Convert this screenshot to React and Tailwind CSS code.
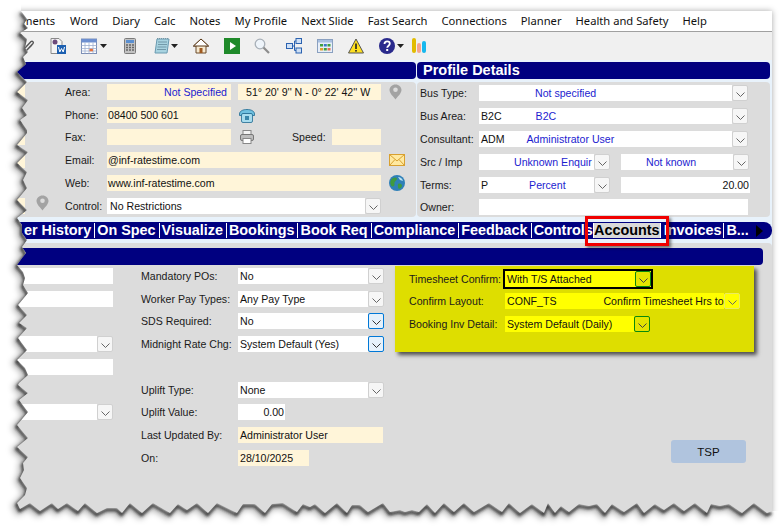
import React from "react";

const leftEdge = "21,11 27,19 24,24 28,28 20,33 27,39 25,48 28,52 23,57 26,64 17,72 27,82 17,92 28,100 22,108 27,115 20,120 27,130 27,133 17,145 28,152 17,163 27,172 23,180 27,188 17,200 27,210 17,218 22,225 22,233 27,240 22,247 26,253 22,258 17,265 23,272 25,278 23,285 28,293 18,305 27,315 19,323 27,328 18,338 27,350 17,360 25,368 28,375 19,383 18,385 28,393 19,400 28,412 17,425 28,438 17,447 28,457 23,463 24,470 20,478 27,488 25,495 17,503";
const bottomEdge = "20,509 30,503 40,511 52,503 58,509 67,503 78,511 85,503 97,513 107,508 117,508 122,513 130,503 142,513 153,503 170,513 178,504 187,510 197,503 208,513 217,503 237,513 243,504 255,504 265,513 272,504 283,503 297,512 303,504 310,507 315,504 325,513 337,503 347,513 352,505 360,505 368,512 383,503 390,512 400,510 405,512 412,510 419,512 427,504 435,513 444,503 454,512 464,503 474,512 489,503 502,512 509,503 520,513 532,504 544,513 548,503 555,513 561,506 569,512 579,504 589,506 597,504 605,513 612,504 624,512 637,503 644,513 655,504 664,510 674,503 684,511 695,503 707,513 711,504 720,506 729,504 742,513 754,503 767,513 772,511";
const edge = leftEdge + " " + bottomEdge;
const outside = "0,0 21,0 " + edge + " 782,511 782,530 0,530";

function Torn() {
  return (
    <svg className="absolute left-0 top-0 pointer-events-none" width="782" height="530">
      <defs>
        <clipPath id="out"><polygon points={outside} /></clipPath>
        <filter id="b1" x="-5%" y="-5%" width="110%" height="110%"><feGaussianBlur stdDeviation="1.4" /></filter>
        <filter id="b2" x="-5%" y="-5%" width="110%" height="110%"><feGaussianBlur stdDeviation="3" /></filter>
      </defs>
      <polygon points={outside} fill="#fff" />
      <g clipPath="url(#out)">
        <polyline points={edge} fill="none" stroke="#000" strokeOpacity="0.35" strokeWidth="5" filter="url(#b2)" transform="translate(-2 3)" />
        <polyline points={edge} fill="none" stroke="#222" strokeWidth="2.5" filter="url(#b1)" transform="translate(-0.5 2)" />
      </g>
    </svg>
  );
}

function Chevron({ color = "#666" }) {
  return (
    <svg width="9" height="5" viewBox="0 0 9 5" className="mt-[2px]">
      <polyline points="0.5,0.5 4.5,4.5 8.5,0.5" fill="none" stroke={color} strokeWidth="1" />
    </svg>
  );
}

function Dd({ kind = "gray" }) {
  if (kind === "blue")
    return <div className="w-[16px] h-[16px] shrink-0 flex items-center justify-center rounded-[2px] border border-[#0078d7] bg-[#e5f1fb]"><Chevron color="#333" /></div>;
  if (kind === "green")
    return <div className="w-[16px] h-[16px] shrink-0 flex items-center justify-center rounded-[2px] border border-[#0a8a0a] bg-[#e4e400]"><Chevron color="#444" /></div>;
  if (kind === "yellow")
    return <div className="w-[16px] h-[16px] shrink-0 flex items-center justify-center rounded-[2px] border border-[#ecec60] bg-[#ffff00]"><Chevron color="#666" /></div>;
  return <div className="w-[16px] h-[16px] shrink-0 flex items-center justify-center rounded-[2px] border border-[#d0d0d0] bg-[#f6f6f6]"><Chevron /></div>;
}

const Label = ({ children, className = "" }) => <div className={"shrink-0 whitespace-nowrap text-[#1a1a1a] " + className}>{children}</div>;

const Cream = ({ className = "", children }) => <div className={"h-[16px] bg-[#fff5d9] flex items-center overflow-hidden whitespace-nowrap shrink-0 " + className}>{children}</div>;
const White = ({ className = "", children }) => <div className={"h-[16px] bg-white flex items-center overflow-hidden whitespace-nowrap shrink-0 " + className}>{children}</div>;
const Blue = ({ className = "", children }) => <span className={"text-[#1c1ccf] " + className}>{children}</span>;

function Pin({ className = "" }) {
  return (
    <svg width="13" height="16" viewBox="0 0 13 16" className={className}>
      <path d="M6.5 0.5C3 0.5 0.5 3 0.5 6C0.5 9.5 5 13 6.5 15.5C8 13 12.5 9.5 12.5 6C12.5 3 10 0.5 6.5 0.5Z" fill="#a3a3a3" />
      <circle cx="6.5" cy="5.8" r="2.3" fill="#dcdcdc" />
    </svg>
  );
}

function Caret({ className = "" }) {
  return <svg width="7" height="4" viewBox="0 0 7 4" className={className}><polygon points="0,0 7,0 3.5,4" fill="#222" /></svg>;
}

const s = { width: 16, height: 16, viewBox: "0 0 16 16" };

function Toolbar() {
  return (
    <div className="h-[28px] bg-[#f0f0f0] flex items-center pl-[7px] shrink-0">
      <svg width="12" height="14" viewBox="0 0 12 14">
        <path d="M3 12L10 4.5C11 3.2 9.5 1.5 8 2.5L2 9C1 10.5 2.5 12 4 11L9 6" fill="none" stroke="#555" strokeWidth="1.4" />
      </svg>
      <svg {...s} className="ml-[15px]">
        <path d="M1 0.5H9L12 3.5V15.5H1Z" fill="#f4f4f4" stroke="#8a8a8a" />
        <circle cx="5" cy="4" r="2.5" fill="#6b4a7a" />
        <rect x="7" y="7" width="9" height="9" fill="#1c5fb0" />
        <path d="M8.5 9L9.8 14L11.5 10.5L13.2 14L14.5 9" fill="none" stroke="#fff" strokeWidth="1" />
      </svg>
      <svg {...s} className="ml-[15px]">
        <rect x="0.5" y="1" width="15" height="14.5" fill="#fff" stroke="#7d8fb5" />
        <rect x="0.5" y="1" width="15" height="3.5" fill="#6d8fd0" />
        <path d="M0.5 7.5H15.5M0.5 10.5H15.5M0.5 13H15.5M4 4.5V15.5M8 4.5V15.5M12 4.5V15.5" stroke="#9fb0d0" strokeWidth="0.8" />
        <rect x="8.5" y="10.8" width="3.4" height="2.5" fill="#e8703a" />
      </svg>
      <Caret className="ml-[3px]" />
      <svg width="12" height="16" viewBox="0 0 12 16" className="ml-[17px]">
        <rect x="0.5" y="0.5" width="11" height="15" rx="1" fill="#c2c2c2" stroke="#7a7a7a" />
        <rect x="2" y="2" width="8" height="3" fill="#5a8fd0" />
        <path d="M2 7H4M5 7H7M8 7H10M2 9.5H4M5 9.5H7M8 9.5H10M2 12H4M5 12H7M8 12H10" stroke="#666" strokeWidth="1.4" />
      </svg>
      <svg {...s} className="ml-[18px]">
        <path d="M3 1H15L13 15H1Z" fill="#a8d3e0" stroke="#6a9ab0" />
        <path d="M4 1L3 0M6 1L5 0M8 1L7 0M10 1L9 0M12 1L11 0M14 1L13 0M4 4H13M4 6.5H13M3.5 9H12.5M3 11.5H12" stroke="#5a7f90" strokeWidth="0.7" />
      </svg>
      <Caret className="ml-[1px]" />
      <svg {...s} className="ml-[15px]">
        <path d="M8 1L0.5 8H3V15H13V8H15.5Z" fill="#f5e9d0" stroke="#6b4a2a" />
        <path d="M8 1L0.5 8H15.5Z" fill="#fff" stroke="#5a3a1a" />
        <rect x="6.5" y="10" width="3" height="5" fill="#a05a20" />
      </svg>
      <svg {...s} className="ml-[15px]">
        <rect width="16" height="16" fill="#1f8a2a" />
        <polygon points="6,4 12,8 6,12" fill="#fff" />
      </svg>
      <svg {...s} className="ml-[14px]">
        <circle cx="6" cy="6" r="4.8" fill="#eef4fa" stroke="#a8b0b8" strokeWidth="1.3" />
        <path d="M9.5 9.5L15 15" stroke="#8d8d8d" strokeWidth="2.2" />
      </svg>
      <svg {...s} className="ml-[16px]">
        <rect x="0.5" y="5.5" width="6" height="5" fill="#cfe0f5" stroke="#2b62b0" />
        <rect x="10" y="0.5" width="5.5" height="5" fill="#cfe0f5" stroke="#2b62b0" />
        <rect x="10" y="10" width="5.5" height="5" fill="#cfe0f5" stroke="#2b62b0" />
        <path d="M6.5 8H8.5M8.5 3V12.5H10M8.5 3H10" fill="none" stroke="#2b62b0" />
      </svg>
      <svg {...s} className="ml-[15px]">
        <rect x="0.5" y="1.5" width="15" height="13" fill="#e8eff8" stroke="#8aa0c0" />
        <rect x="1" y="2" width="14" height="2.5" fill="#a8c0e0" />
        <rect x="3" y="6" width="3" height="2.5" fill="#3f9f3f" /><rect x="6.8" y="6" width="3" height="2.5" fill="#3b78c8" /><rect x="10.5" y="6" width="3" height="2.5" fill="#3f9f3f" />
        <rect x="3" y="10" width="3" height="2.5" fill="#e0a030" /><rect x="6.8" y="10" width="3" height="2.5" fill="#3f9f3f" /><rect x="10.5" y="10" width="3" height="2.5" fill="#e07050" />
      </svg>
      <svg {...s} className="ml-[15px]">
        <path d="M8 1L15.5 15H0.5Z" fill="#ffe020" stroke="#555" strokeLinejoin="round" />
        <rect x="7.2" y="5.5" width="1.6" height="5.5" fill="#222" />
        <rect x="7.2" y="12" width="1.6" height="1.6" fill="#222" />
      </svg>
      <svg {...s} className="ml-[15px]">
        <circle cx="8" cy="8" r="8" fill="#2a2a8c" />
        <path d="M5.5 6C5.5 4.2 6.8 3.4 8.2 3.4C9.8 3.4 10.8 4.4 10.8 5.7C10.8 7.6 8.2 7.8 8.2 9.8" fill="none" stroke="#fff" strokeWidth="1.8" />
        <rect x="7.2" y="11" width="2" height="2" fill="#fff" />
      </svg>
      <Caret className="ml-[2px]" />
      <svg width="14" height="16" viewBox="0 0 14 16" className="ml-[8px]">
        <rect x="0" y="0" width="4" height="15" rx="2" fill="#e2bc00" />
        <rect x="5" y="5" width="4" height="10" rx="2" fill="#f6a48e" />
        <rect x="10" y="3" width="4" height="12" rx="2" fill="#18b8ee" />
      </svg>
    </div>
  );
}

const tabs = ["er History", "On Spec", "Visualize", "Bookings", "Book Req", "Compliance", "Feedback", "Controls"];

function TabBar() {
  return (
    <div className="h-[17px] mt-[5px] bg-[#000080] rounded-r-[8px] flex items-center pl-[8px] shrink-0 text-white font-bold text-[14.4px] leading-[17px] overflow-hidden">
      {tabs.map((t, i) => (
        <div key={t} className="whitespace-nowrap pr-[3px] mr-[2px] border-r border-white h-[15px] flex items-center">{t}</div>
      ))}
      <div className="whitespace-nowrap w-[68px] h-[15px] -ml-[6px] bg-[#d9d9d9] text-black border-x border-white flex items-center justify-center overflow-hidden">Accounts</div>
      <div className="whitespace-nowrap ml-[3px] pr-[2px] mr-[2px] border-r border-white h-[15px] flex items-center">Invoices</div>
      <div className="whitespace-nowrap">B...</div>
      <svg width="7" height="12" viewBox="0 0 7 12" className="ml-[7px]"><polygon points="0,0 7,6 0,12" fill="#000" /></svg>
    </div>
  );
}

function Profile() {
  return (
    <div className="w-[353px] ml-[1px] flex flex-col shrink-0">
      <div className="h-[17px] mt-[2px] bg-[#000080] rounded-[4px] text-white font-bold text-[14.5px] leading-[17px] pl-[6px]">Profile Details</div>
      <div className="h-[135px] mt-[3px] bg-[#dcdcdc] rounded-[4px] pt-[3px] pl-[3px]">
        <div className="flex h-[23px]"><Label className="w-[59px]">Bus Type:</Label><White className="w-[253px] pl-[56px]"><Blue>Not specified</Blue></White><Dd /></div>
        <div className="flex h-[23px]"><Label className="w-[59px]">Bus Area:</Label><White className="w-[253px] pl-[2px]">B2C<Blue className="ml-[34px]">B2C</Blue></White><Dd /></div>
        <div className="flex h-[23px]"><Label className="w-[59px]">Consultant:</Label><White className="w-[253px] pl-[2px]">ADM<Blue className="ml-[22px]">Administrator User</Blue></White><Dd /></div>
        <div className="flex h-[23px]"><Label className="w-[59px]">Src / Imp</Label><White className="w-[115px] pl-[35px]"><Blue>Unknown Enquir</Blue></White><Dd /><White className="w-[112px] ml-[11px] pl-[25px]"><Blue>Not known</Blue></White><Dd /></div>
        <div className="flex h-[22px]"><Label className="w-[59px]">Terms:</Label><White className="w-[115px] pl-[2px]">P<Blue className="ml-[41px]">Percent</Blue></White><Dd /><White className="w-[129px] ml-[11px] justify-end pr-[1px]">20.00</White></div>
        <div className="flex h-[16px]"><Label className="w-[59px]">Owner:</Label><White className="w-[269px]" /></div>
      </div>
    </div>
  );
}

function Stub() {
  return <div className="w-[9px] h-[16px] bg-[#fff5d9]" />;
}

function Contact() {
  return (
    <div className="w-[400px] flex flex-col shrink-0">
      <div className="h-[17px] mt-[2px] bg-[#000080] rounded-r-[4px]" />
      <div className="h-[135px] mt-[3px] bg-[#dcdcdc] rounded-r-[4px] pt-[2px]">
        <div className="flex h-[23px]"><div className="w-[49px]"><Stub /></div><Label className="w-[42px]">Area:</Label><Cream className="w-[124px] justify-end pr-[4px]"><Blue>Not Specified</Blue></Cream><Cream className="w-[143px] ml-[7px] pl-[8px]">51° 20' 9'' N - 0° 22' 42'' W</Cream><Pin className="ml-[8px]" /></div>
        <div className="flex h-[22px]"><div className="w-[49px]" /><Label className="w-[42px]">Phone:</Label><Cream className="w-[124px] pl-[1px]">08400 500 601</Cream>
          <svg width="16" height="14" viewBox="0 0 16 14" className="ml-[8px] mt-[2px]">
            <path d="M0.5 5C0.5 2 4 0.5 8 0.5C12 0.5 15.5 2 15.5 5V6.5H12V4.5H4V6.5H0.5Z" fill="#6fc0e0" stroke="#1f6a90" strokeWidth="0.8" />
            <rect x="2.5" y="4.5" width="11" height="9" rx="1.5" fill="#a8dcee" stroke="#1f6a90" strokeWidth="0.8" />
            <rect x="6" y="7" width="4" height="4" fill="#3a86aa" />
          </svg>
        </div>
        <div className="flex h-[23px]"><div className="w-[49px]"><Stub /></div><Label className="w-[42px]">Fax:</Label><Cream className="w-[124px]" />
          <svg width="14" height="14" viewBox="0 0 14 14" className="ml-[9px] mt-[1px]">
            <rect x="3" y="0.5" width="8" height="5" fill="#f4f4f4" stroke="#888" />
            <rect x="0.5" y="4.5" width="13" height="6" rx="1.5" fill="#bdbdbd" stroke="#777" />
            <rect x="3" y="8.5" width="8" height="5" fill="#fff" stroke="#888" />
          </svg>
          <Label className="ml-[38px] w-[40px]">Speed:</Label><Cream className="w-[49px]" /></div>
        <div className="flex h-[23px]"><div className="w-[49px]"><Stub /></div><Label className="w-[42px]">Email:</Label><Cream className="w-[274px] pl-[1px]">@inf-ratestime.com</Cream>
          <svg width="16" height="12" viewBox="0 0 16 12" className="ml-[8px] mt-[2px]">
            <rect x="0.5" y="0.5" width="15" height="11" fill="#ffe9a0" stroke="#d8a030" />
            <path d="M0.5 0.5L8 7L15.5 0.5M0.5 11.5L6 5.5M15.5 11.5L10 5.5" fill="none" stroke="#d8a030" />
          </svg>
        </div>
        <div className="flex h-[23px]"><div className="w-[49px]" /><Label className="w-[42px]">Web:</Label><Cream className="w-[274px] pl-[1px]">www.inf-ratestime.com</Cream>
          <svg {...s} className="ml-[8px]">
            <circle cx="8" cy="8" r="8" fill="#2f80b8" />
            <path d="M2 5C4 2 7 2 8 3.5C8 6 5 6 5.5 9C6 11 4 12 2.5 11C1 9 1 7 2 5ZM9 9C11 8 13 9 13 11C12 13.5 10.5 14 9.5 13.5C9 12 8.5 10.5 9 9Z" fill="#3f9a40" />
            <path d="M9 2C11 2 13.5 3.5 14 6L11 5Z" fill="#b8e0f0" />
          </svg>
        </div>
        <div className="flex h-[16px]"><div className="w-[49px] flex"><Stub /><Pin className="ml-[11px] -mt-[3px]" /></div><Label className="w-[42px]">Control:</Label><White className="w-[258px] pl-[3px]">No Restrictions</White><Dd /></div>
      </div>
    </div>
  );
}

function Bottom() {
  return (
    <div className="flex-1 mt-[4px] bg-[#dcdcdc] rounded-tr-[4px] pt-[5px] flex flex-col min-h-0">
      <div className="h-[17px] w-[747px] bg-[#000080] rounded-r-[4px] shrink-0" />
      <div className="flex">
        <div className="w-[97px] pt-[3px] shrink-0">
          <div className="h-[23px]"><White className="w-[97px]" /></div>
          <div className="h-[22px]"><div /><White className="w-[97px]" /></div>
          <div className="h-[23px]" />
          <div className="h-[23px] flex"><White className="w-[81px]" /><Dd /></div>
          <div className="h-[23px]"><White className="w-[97px]" /></div>
          <div className="h-[22px]" />
          <div className="h-[23px] flex"><White className="w-[81px]" /><Dd /></div>
        </div>
        <div className="w-[242px] ml-[28px] pt-[3px] shrink-0">
          <div className="h-[23px] flex"><Label className="w-[97px]">Mandatory POs:</Label><White className="w-[130px] pl-[2px]">No</White><Dd /></div>
          <div className="h-[22px] flex"><Label className="w-[97px]">Worker Pay Types:</Label><White className="w-[130px] pl-[2px]">Any Pay Type</White><Dd /></div>
          <div className="h-[23px] flex"><Label className="w-[97px]">SDS Required:</Label><White className="w-[130px] pl-[2px]">No</White><Dd kind="blue" /></div>
          <div className="h-[23px] flex"><Label className="w-[97px]">Midnight Rate Chg:</Label><White className="w-[130px] pl-[2px]">System Default (Yes)</White><Dd kind="blue" /></div>
          <div className="h-[23px]" />
          <div className="h-[22px] flex"><Label className="w-[97px]">Uplift Type:</Label><White className="w-[130px] pl-[2px]">None</White><Dd /></div>
          <div className="h-[23px] flex"><Label className="w-[97px]">Uplift Value:</Label><White className="w-[47px] justify-end pr-[1px]">0.00</White></div>
          <div className="h-[23px] flex"><Label className="w-[97px]">Last Updated By:</Label><Cream className="w-[145px] pl-[2px]">Administrator User</Cream></div>
          <div className="h-[16px] flex"><Label className="w-[97px]">On:</Label><Cream className="w-[71px] pl-[2px]">28/10/2025</Cream></div>
        </div>
        <div className="ml-[12px] mt-[1px] w-[359px] shrink-0">
          <div className="h-[86px] bg-[#dede00] shadow-[3px_3px_4px_rgba(0,0,0,0.65)] pt-[3px] pl-[14px]">
            <div className="h-[24px] flex items-start">
              <Label className="w-[94px] h-[20px] flex items-center">Timesheet Confirm:</Label>
              <div className="w-[150px] h-[20px] border-[2px] border-black bg-[#ffff00] flex items-center pl-[2px]">
                <div className="w-[129px]">With T/S Attached</div><Dd kind="green" />
              </div>
            </div>
            <div className="h-[23px] flex">
              <Label className="w-[96px]">Confirm Layout:</Label>
              <div className="w-[219px] h-[16px] bg-[#ffff00] flex items-center pl-[2px] overflow-hidden whitespace-nowrap">CONF_TS<span className="ml-[47px]">Confirm Timesheet Hrs to</span></div><Dd kind="yellow" />
            </div>
            <div className="h-[16px] flex">
              <Label className="w-[96px]">Booking Inv Detail:</Label>
              <div className="w-[129px] h-[16px] bg-[#ffff00] flex items-center pl-[2px] whitespace-nowrap">System Default (Daily)</div><Dd kind="green" />
            </div>
          </div>
          <div className="w-[75px] h-[23px] ml-[276px] mt-[88px] bg-[#b0c4de] rounded-[3px] flex items-center justify-center text-[11.5px]">TSP</div>
        </div>
      </div>
    </div>
  );
}

export default function App() {
  return (
    <div className="relative w-[782px] h-[530px] bg-white overflow-hidden pt-[11px] pl-[16px] text-[10.6px] leading-[16px] text-[#111]" style={{ fontFamily: '"Liberation Sans", Arial, sans-serif' }}>
      <div className="w-[756px] h-[504px] bg-[#e8f2fb] flex flex-col shadow-[0_0_6px_rgba(0,0,0,0.35)]">
        <div className="h-[21px] bg-white border-b border-[#a0a0a0] flex items-center pl-[6px] gap-[14px] shrink-0 text-[11.2px] text-[#111] whitespace-nowrap" style={{ fontFamily: '"Noto Sans", sans-serif' }}>
          <span className="w-[34px]">ments</span><span>Word</span><span>Diary</span><span>Calc</span><span>Notes</span><span>My Profile</span><span>Next Slide</span><span>Fast Search</span><span>Connections</span><span>Planner</span><span>Health and Safety</span><span>Help</span>
        </div>
        <Toolbar />
        <div className="flex shrink-0">
          <Contact />
          <Profile />
        </div>
        <TabBar />
        <Bottom />
      </div>
      <div className="absolute left-[585px] top-[216px] w-[84px] h-[30px] border-[3px] border-[#f00000] shadow-[2px_2px_3px_rgba(0,0,0,0.5)]" />
      <Torn />
    </div>
  );
}
